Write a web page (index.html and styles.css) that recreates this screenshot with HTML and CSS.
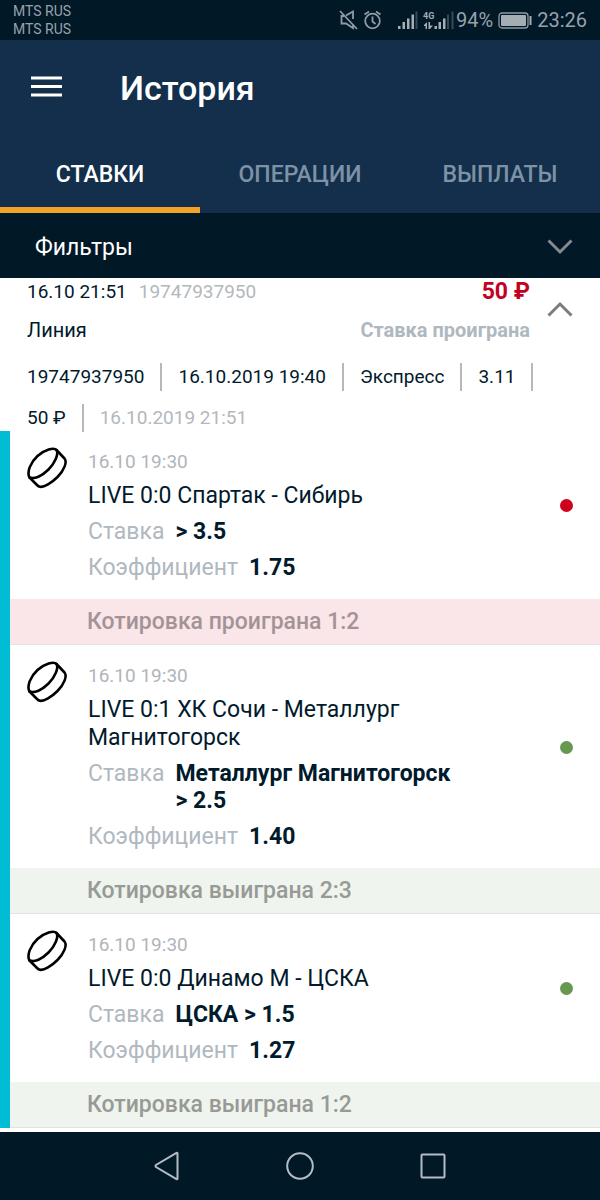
FILE: index.html
```html
<!DOCTYPE html>
<html lang="ru">
<head>
<meta charset="utf-8">
<meta name="viewport" content="width=device-width, initial-scale=1">
<title>История</title>
<link rel="stylesheet" href="styles.css">
</head>
<body>
<svg class="sprite" aria-hidden="true">
  <symbol id="puck" viewBox="0 0 42 42">
    <g fill="none" stroke="#000" stroke-width="2.6" stroke-linejoin="round" stroke-linecap="round">
      <path d="M3.500 30.500C.5 25 4.500 15.500 11.500 9C18.500 2.500 28 0 30.500 3C33 7 29 16 22.500 22.500C16 29 8.500 32.500 3.500 30.500Z"/>
      <path d="M30.500 3L38.500 11.500C41.500 15 38 23.500 31.500 30C25.500 36 18 40.500 14 39.800C12.500 39.500 11.500 38.500 11 38L3.500 30.500"/>
    </g>
  </symbol>
</svg>

<div class="status">
  <div class="carriers"><span>MTS RUS</span><span>MTS RUS</span></div>
  <div class="indicators">
    <svg width="118" height="24" viewBox="338 8 118 24" aria-hidden="true">
      <g fill="none" stroke="#8f9ba5" stroke-width="1.8">
        <path d="M340 11L357 29M346 15.500L353 11.500V19M353 24V28L346 23.500H341.500V16H344"/>
        <circle cx="372.500" cy="21" r="7.300"/>
        <path d="M372.500 16.500V21.500L375.500 24M364.500 14.500L369 11.500M376 11.500L380.500 14.500"/>
      </g>
      <g fill="#a5adb5">
        <path d="M398 26h2.500v3h-2.500zM402.500 22h2.500v7h-2.500zM407 18.500h2.500v10.500h-2.500zM411.500 14.500h2.500v14.500h-2.500z"/>
        <path d="M434.500 26h2.500v3h-2.500zM438.500 22h2.500v7h-2.500zM443 18.500h2.500v10.500h-2.500z"/>
        <path d="M424 25L427 22V29H425.500V26H424zM428.500 22H430V25.500H433L430 29H428.500z"/>
      </g>
      <path fill="#384854" d="M415.500 11.500h2v17.500h-2zM447 14.500h2v14.500h-2zM451.500 11.500h2v17.500h-2z"/>
      <text x="423" y="19" class="network">4G</text>
    </svg>
    <span class="charge">94%</span>
    <svg width="35" height="17" viewBox="0 0 35 17" aria-hidden="true">
      <rect x="1" y="1" width="29" height="15" rx="3" fill="none" stroke="#8f9ba5" stroke-width="1.300"/>
      <rect x="3" y="3" width="25" height="11" rx="1" fill="#a5adb5"/>
      <path d="M32.500 4v9" stroke="#a5adb5" stroke-width="2"/>
    </svg>
    <time>23:26</time>
  </div>
</div>

<header class="header">
  <div class="title-bar">
    <button class="icon-button" type="button" aria-label="Меню">
      <svg width="31" height="24" viewBox="0 0 31 24"><path d="M0 2h31M0 10.500h31M0 19h31" stroke="#fff" stroke-width="3"/></svg>
    </button>
    <h1>История</h1>
  </div>
  <nav class="tabs">
    <button type="button" class="tab active">СТАВКИ</button>
    <button type="button" class="tab">ОПЕРАЦИИ</button>
    <button type="button" class="tab">ВЫПЛАТЫ</button>
  </nav>
</header>

<button type="button" class="filters">
  <span>Фильтры</span>
  <svg width="26" height="18" viewBox="0 0 26 18" aria-hidden="true"><path d="M1.500 1.500L13 13L24.500 1.500" fill="none" stroke="#858a8f" stroke-width="3"/></svg>
</button>

<main class="bet">
  <section class="summary">
    <div class="summary-main">
      <div class="line"><span class="placed"><span>16.10 21:51</span><span class="bet-id">19747937950</span></span><strong class="amount">50 ₽</strong></div>
      <div class="line"><span>Линия</span><strong class="result">Ставка проиграна</strong></div>
    </div>
    <button type="button" class="icon-button" aria-label="Свернуть">
      <svg width="26" height="20" viewBox="0 0 26 20"><path d="M1.500 14.500L13 3L24.500 14.500" fill="none" stroke="#7c7c7c" stroke-width="3"/></svg>
    </button>
  </section>

  <ul class="meta">
    <li>19747937950</li>
    <li>16.10.2019 19:40</li>
    <li>Экспресс</li>
    <li>3.11</li>
    <li>50 ₽</li>
    <li class="settled">16.10.2019 21:51</li>
  </ul>

  <div class="events">
    <article>
      <div class="event">
        <svg class="sport" width="42" height="42" aria-hidden="true"><use href="#puck"/></svg>
        <div class="details">
          <time>16.10 19:30</time>
          <h2>LIVE 0:0 Спартак - Сибирь</h2>
          <dl><dt>Ставка</dt><dd>&gt;&nbsp;3.5</dd></dl>
          <dl><dt>Коэффициент</dt><dd>1.75</dd></dl>
        </div>
        <span class="dot lost"></span>
      </div>
      <p class="outcome outcome-lost">Котировка проиграна 1:2</p>
    </article>
    <article>
      <div class="event">
        <svg class="sport" width="42" height="42" aria-hidden="true"><use href="#puck"/></svg>
        <div class="details">
          <time>16.10 19:30</time>
          <h2>LIVE 0:1 ХК Сочи - Металлург Магнитогорск</h2>
          <dl><dt>Ставка</dt><dd>Металлург Магнитогорск &gt;&nbsp;2.5</dd></dl>
          <dl><dt>Коэффициент</dt><dd>1.40</dd></dl>
        </div>
        <span class="dot won"></span>
      </div>
      <p class="outcome outcome-won">Котировка выиграна 2:3</p>
    </article>
    <article>
      <div class="event">
        <svg class="sport" width="42" height="42" aria-hidden="true"><use href="#puck"/></svg>
        <div class="details">
          <time>16.10 19:30</time>
          <h2>LIVE 0:0 Динамо М - ЦСКА</h2>
          <dl><dt>Ставка</dt><dd>ЦСКА &gt;&nbsp;1.5</dd></dl>
          <dl><dt>Коэффициент</dt><dd>1.27</dd></dl>
        </div>
        <span class="dot won"></span>
      </div>
      <p class="outcome outcome-won">Котировка выиграна 1:2</p>
    </article>
  </div>
</main>

<nav class="system-nav">
  <button type="button" class="icon-button" aria-label="Назад"><svg width="28" height="30" viewBox="0 0 28 30"><path d="M24.500 2.500V27.500Q24.500 28.500 23.500 28L3 16Q2 15 3 14L23.500 2Q24.500 1.500 24.500 2.500Z"/></svg></button>
  <button type="button" class="icon-button" aria-label="Домой"><svg width="28" height="30" viewBox="0 0 28 30"><circle cx="14" cy="15" r="12.800"/></svg></button>
  <button type="button" class="icon-button" aria-label="Последние"><svg width="28" height="30" viewBox="0 0 28 30"><rect x="2.500" y="3.500" width="23" height="23" rx="1"/></svg></button>
</nav>
</body>
</html>
```
FILE: styles.css
```css
* {
  box-sizing: border-box;
}

body {
  margin: 0;
  min-height: 100vh;
  display: flex;
  flex-direction: column;
  background: #fff;
  color: #011a2c;
  font-family: Roboto, "Liberation Sans", sans-serif;
  font-size: 20px;
  line-height: 24px;
}

h1, h2, p, ul, dl, dd {
  margin: 0;
  padding: 0;
}

button {
  border: 0;
  padding: 0;
  background: none;
  color: inherit;
  font: inherit;
  cursor: pointer;
}

svg {
  display: block;
  flex: none;
}

.sprite {
  position: absolute;
  width: 0;
  height: 0;
}

.icon-button {
  display: flex;
}

/* Status bar */
.status {
  display: flex;
  justify-content: space-between;
  align-items: center;
  height: 40px;
  padding: 0 13px;
  background: #011827;
  color: #98a2ab;
}

.carriers {
  display: flex;
  flex-direction: column;
  font-size: 14px;
  line-height: 18px;
}

.indicators {
  display: flex;
  align-items: center;
}

.network {
  fill: #a5adb5;
  font-size: 9px;
  font-weight: 700;
}

.charge {
  margin-right: 5px;
}

.indicators time {
  margin-left: 4px;
}

/* Header */
.header {
  background: #132f4b;
  color: #fff;
}

.title-bar {
  display: flex;
  align-items: center;
  gap: 58px;
  height: 96px;
  padding: 0 31px;
}

h1 {
  font-size: 34px;
  line-height: 40px;
  font-weight: 500;
}

.tabs {
  display: grid;
  grid-template-columns: repeat(3, 1fr);
}

.tab {
  height: 77px;
  border-top: 6px solid transparent;
  border-bottom: 6px solid transparent;
  color: #7d92a6;
  font-size: 23px;
  font-weight: 500;
}

.tab.active {
  border-bottom-color: #f1a325;
  color: #fff;
}

.filters {
  display: flex;
  justify-content: space-between;
  align-items: center;
  height: 65px;
  padding: 4px 27px 0 35px;
  background: #011827;
  color: #fff;
  font-size: 23px;
}

/* Bet summary */
.bet {
  flex: 1;
}

.summary {
  display: flex;
  align-items: center;
  gap: 17px;
  padding: 2px 27px 0;
}

.summary-main {
  flex: 1;
  display: flex;
  flex-direction: column;
  gap: 14px;
}

.line {
  display: flex;
  justify-content: space-between;
}

.placed {
  font-size: 19px;
}

.bet-id {
  margin-left: 12px;
  color: #b3b8bd;
}

.amount {
  color: #c4001f;
  font-size: 23px;
}

.result {
  color: #b0b8bf;
}

.meta {
  display: flex;
  flex-wrap: wrap;
  row-gap: 13px;
  padding: 21px 27px 0;
  list-style: none;
  font-size: 19px;
}

.meta li {
  margin-right: 16px;
  padding-right: 16px;
  border-right: 2px solid #b4b9be;
  line-height: 28px;
}

.meta .settled {
  border-right: 0;
  color: #b3b8bd;
}

/* Events */
.events {
  margin-top: -1px;
  border-left: 10px solid #00bcd4;
}

.event {
  display: flex;
  align-items: flex-start;
  padding: 16px 27px 18px 16px;
}

.sport {
  margin-right: 20px;
}

.details {
  flex: 1;
  margin: 3px 70px 0 0;
}

.details time {
  display: block;
  color: #b0b5bb;
  font-size: 19px;
}

h2 {
  margin: 8px 0;
  font-size: 23px;
  line-height: 28px;
  font-weight: 400;
}

dl {
  display: flex;
  gap: 11px;
  font-size: 23px;
  line-height: 27px;
}

dl + dl {
  margin-top: 9px;
}

dt {
  color: #b0b8c0;
}

dd {
  font-weight: 700;
}

.dot {
  flex: none;
  align-self: center;
  width: 13px;
  height: 13px;
  margin-bottom: 17px;
  border-radius: 50%;
}

.lost {
  background: #d0021b;
}

.won {
  background: #66994f;
}

.outcome {
  padding: 1px 77px 0;
  border-bottom: 1px solid #e3e3e3;
  color: #979a95;
  font-size: 23px;
  line-height: 44px;
  font-weight: 500;
}

.outcome-lost {
  background: #fae5e8;
  color: #a39396;
}

.outcome-won {
  background: #eff4ee;
}

/* System navigation */
.system-nav {
  display: flex;
  justify-content: center;
  align-items: center;
  gap: 105px;
  height: 68px;
  background: #011827;
}

.system-nav svg {
  fill: none;
  stroke: #b5bdc4;
  stroke-width: 2;
}
```
